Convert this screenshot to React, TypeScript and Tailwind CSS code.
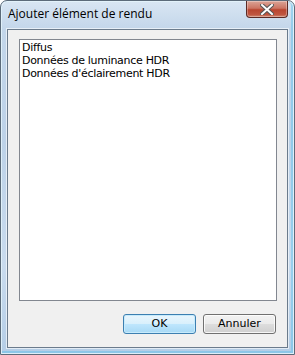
export default function App() {
  const items = ['Diffus', 'Données de luminance HDR', "Données d'éclairement HDR"];

  return (
    <div className="w-[295px] h-[355px] overflow-hidden bg-white">
      {/* Window frame */}
      <div className="relative flex h-full w-full flex-col rounded-t-[7px] border border-[#5c6b7a] bg-[linear-gradient(180deg,#d9e6f3_0%,#c3d6ea_8%,#bdd2e8_40%,#c9dbee_75%,#b4cde6_100%)] shadow-[inset_0_0_0_1px_rgba(255,255,255,0.7),inset_-1px_-1px_0_2px_rgba(90,190,235,0.45)]">
        {/* Title bar */}
        <div className="flex h-[28px] items-start">
          <span className="pl-[7px] pt-[6px] text-[12px] leading-[14px] text-black [font-family:'Open_Sans','Noto_Sans',sans-serif]">
            Ajouter élément de rendu
          </span>
          <div className="ml-auto mr-[6px] flex h-[17px] w-[42px] items-center justify-center rounded-b-[4px] border border-t-0 border-[#5b2a25] bg-[linear-gradient(180deg,#dba497_0%,#cc7563_45%,#b8452f_55%,#c05640_85%,#d08a72_100%)] shadow-[inset_0_0_0_1px_rgba(255,255,255,0.3)]">
            <svg width="14" height="11" viewBox="0 0 14 11">
              <path
                d="M2 1 L12 10 M12 1 L2 10"
                stroke="#555555"
                strokeWidth="4"
                strokeLinecap="square"
              />
              <path
                d="M2 1 L12 10 M12 1 L2 10"
                stroke="#ffffff"
                strokeWidth="2"
                strokeLinecap="square"
              />
            </svg>
          </div>
        </div>

        {/* Client area */}
        <div className="mx-[6px] mb-[6px] flex flex-1 flex-col border border-[#6b7b8c] bg-[#f0f0f0] pl-[11px] pr-[10px] pt-[9px] shadow-[0_0_0_1px_rgba(255,255,255,0.6)]">
          {/* List box */}
          <div className="h-[262px] border border-[#828790] bg-white px-[2px] pt-[1px] text-[11px] leading-[13px] text-black [font-family:'DejaVu_Sans',sans-serif]">
            {items.map((item) => (
              <div key={item} className="whitespace-nowrap tracking-[-0.3px]">
                {item}
              </div>
            ))}
          </div>

          {/* Buttons */}
          <div className="mt-[13px] flex justify-end gap-[7px] pr-[1px] text-[11px] [font-family:'DejaVu_Sans',sans-serif]">
            <button className="flex h-[20px] w-[73px] items-center justify-center rounded-[3px] border border-[#3c7fb1] bg-[linear-gradient(180deg,#eaf6fd_0%,#d9f0fc_48%,#bee6fd_52%,#a7d9f5_100%)] text-black shadow-[inset_0_0_0_1px_#c7ebfc]">
              OK
            </button>
            <button className="flex h-[20px] w-[73px] items-center justify-center rounded-[3px] border border-[#707070] bg-[linear-gradient(180deg,#f2f2f2_0%,#ebebeb_48%,#dddddd_52%,#cfcfcf_100%)] text-black shadow-[inset_0_0_0_1px_rgba(255,255,255,0.8)]">
              Annuler
            </button>
          </div>
        </div>
      </div>
    </div>
  );
}
